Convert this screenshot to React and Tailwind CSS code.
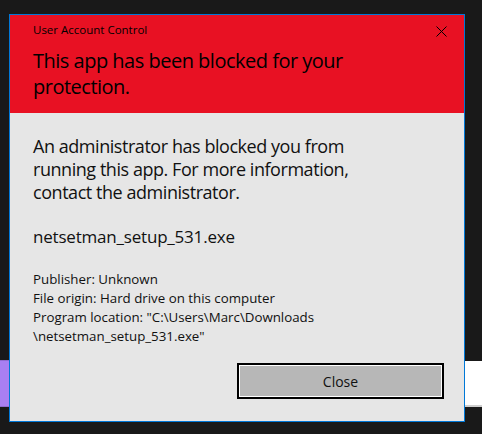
export default function App() {
  const font = { fontFamily: '"Open Sans", "Noto Sans", sans-serif' };
  return (
    <div className="relative w-[482px] h-[434px] bg-[#191919] overflow-hidden" style={font}>
      <div className="absolute left-0 top-[360px] w-[12px] h-[47px] bg-[#a97ff2] border-y border-[#8f6bd0]" />
      <div className="absolute right-0 top-[361px] w-[20px] h-[46px] bg-white border-b-2 border-[#cfcfcf]" />
      <div className="relative ml-[9px] pt-[14px]">
        <div className="w-[456px] h-[408px] border border-[#0078d7] bg-[#e6e6e6] flex flex-col">
          <div className="bg-[#e81123] h-[98px] pl-[23px] pr-[16px] pt-[7px] text-black">
            <div className="flex justify-between items-start">
              <div className="text-[11.5px] leading-[16px] h-[16px]">User Account Control</div>
              <svg width="11" height="11" viewBox="0 0 11 11" className="mt-[4px] mr-[1px]">
                <path d="M0.5 0.5 L10.5 10.5 M10.5 0.5 L0.5 10.5" stroke="#000" strokeWidth="1" />
              </svg>
            </div>
            <div className="mt-[10px] text-[20px] leading-[26px] tracking-[-0.5px]">
              This app has been blocked for your
              <br />
              protection.
            </div>
          </div>
          <div className="pl-[23px] pr-[20px] text-black">
            <div className="pt-[21.5px] text-[18px] leading-[23.3px] tracking-[-0.45px] text-[#111]">
              An administrator has blocked you from
              <br />
              running this app. For more information,
              <br />
              contact the administrator.
            </div>
            <div className="mt-[21px] text-[17px] leading-[24px] tracking-[-0.2px] text-[#111]">netsetman_setup_531.exe</div>
            <div className="mt-[20.5px] text-[13.3px] leading-[19px] text-[#111]">
              <div>Publisher: Unknown</div>
              <div>File origin: Hard drive on this computer</div>
              <div>Program location: "C:\Users\Marc\Downloads</div>
              <div>\netsetman_setup_531.exe"</div>
            </div>
            <div className="flex justify-end mt-[17.5px]">
              <div className="w-[207px] h-[36px] border-2 border-black">
                <div className="w-full h-full border border-white bg-[#b7b7b7] flex items-center justify-center text-[14px] text-[#111]">
                  Close
                </div>
              </div>
            </div>
          </div>
        </div>
      </div>
    </div>
  );
}
